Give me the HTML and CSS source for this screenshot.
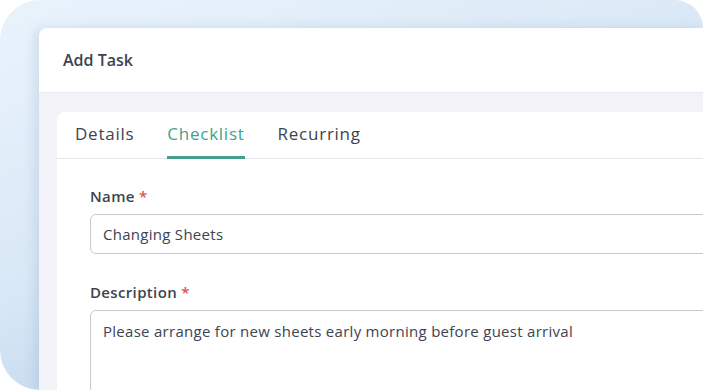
FILE: index.html
```html
<!DOCTYPE html>
<html lang="en">
  <head>
    <meta charset="UTF-8" />
    <meta name="viewport" content="width=device-width, initial-scale=1.0" />
    <title>Add Task</title>
    <link rel="stylesheet" href="styles.css">
  </head>
  <body>
    <div class="backdrop">
      <div class="modal">
        <header class="modal-header">
          <h1>Add Task</h1>
        </header>
        <div class="modal-body">
          <div class="panel">
            <nav class="tabs">
              <a class="tab">Details</a>
              <a class="tab active">Checklist</a>
              <a class="tab">Recurring</a>
            </nav>
            <form class="form">
              <label class="field-label">Name <span class="req">*</span></label>
              <input class="field-input" type="text" value="Changing Sheets" />
              <label class="field-label desc-label">Description <span class="req">*</span></label>
              <textarea class="field-input field-area">Please arrange for new sheets early morning before guest arrival</textarea>
            </form>
          </div>
        </div>
      </div>
    </div>
  </body>
</html>
```

FILE: styles.css
```css
body {
  margin: 0;
  padding: 0;
  background-color: white;
  font-family: "Open Sans", sans-serif;
  color: #3d4450;
  overflow: hidden;
}
.backdrop {
  width: 703px;
  height: 390px;
  border-radius: 40px 28px 0 40px;
  background: linear-gradient(160deg, #eaf3fc 0%, #d9e8f6 45%, #a9c8e4 100%);
  padding: 28px 0 0 39px;
  box-sizing: border-box;
  overflow: hidden;
}
.modal {
  width: 665px;
  height: 362px;
  background-color: white;
  border-radius: 8px 0 0 0;
  box-shadow: -4px 0 12px rgba(90, 130, 170, 0.18);
  overflow: hidden;
}
.modal-header {
  height: 64px;
  padding: 0 24px;
  display: flex;
  align-items: center;
  border-bottom: 1px solid #e8e8ee;
}
.modal-header h1 {
  margin: 0;
  font-size: 16px;
  font-weight: 600;
  color: #3d4450;
}
.modal-body {
  background-color: #f3f2f8;
  padding: 19px 0 0 18px;
  height: 297px;
  box-sizing: border-box;
}
.panel {
  background-color: white;
  border-radius: 8px 0 0 0;
  height: 278px;
  overflow: hidden;
}
.tabs {
  display: flex;
  gap: 33px;
  padding: 0 18px;
  border-bottom: 1px solid #e6e6ec;
}
.tab {
  font-size: 17px;
  letter-spacing: 0.75px;
  line-height: 44px;
  color: #3d4450;
  border-bottom: 3px solid transparent;
  margin-bottom: -1px;
}
.tab.active {
  color: #44a08d;
  border-bottom-color: #44a08d;
}
.form {
  display: flex;
  flex-direction: column;
  padding: 27px 0 0 33px;
}
.field-label {
  font-size: 15px;
  font-weight: 600;
  letter-spacing: 0.35px;
  margin-bottom: 8px;
}
.req {
  color: #d9534f;
}
.desc-label {
  margin-top: 28px;
}
.field-input {
  font-family: inherit;
  font-size: 15px;
  letter-spacing: 0.28px;
  color: #3d4450;
  border: 1px solid #c8c8d0;
  border-radius: 6px;
  padding: 0 12px;
  height: 40px;
  box-sizing: border-box;
  width: 640px;
  outline: none;
}
.field-area {
  height: 120px;
  padding: 10px 12px;
  line-height: 20px;
  resize: none;
}
```
